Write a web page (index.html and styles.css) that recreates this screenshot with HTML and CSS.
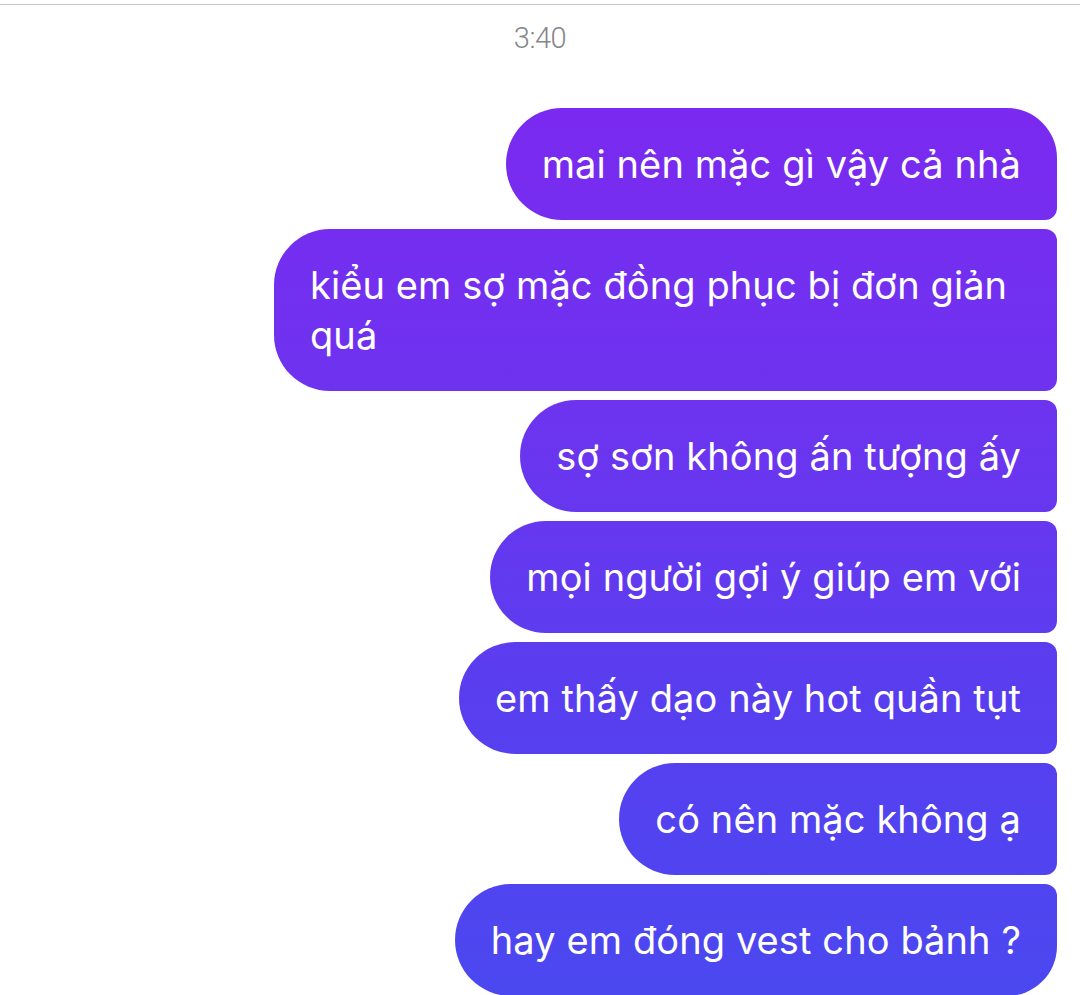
FILE: index.html
```html
<!DOCTYPE html>
<html lang="vi">
<head>
<meta charset="utf-8">
<link rel="stylesheet" href="styles.css">
</head>
<body>
<div class="topline"></div>
<div class="time">3:40</div>
<div class="thread">
  <div class="msg first">mai nên mặc gì vậy cả nhà</div>
  <div class="msg">kiểu em sợ mặc đồng phục bị đơn giản quá</div>
  <div class="msg">sợ sơn không ấn tượng ấy</div>
  <div class="msg">mọi người gợi ý giúp em với</div>
  <div class="msg">em thấy dạo này hot quần tụt</div>
  <div class="msg">có nên mặc không ạ</div>
  <div class="msg last">hay em đóng vest cho bảnh ?</div>
</div>
</body>
</html>
```
FILE: styles.css
```css
html, body {
  margin: 0;
  padding: 0;
  background: #ffffff;
  overflow: hidden;
}
body {
  width: 1080px;
  height: 995px;
  font-family: Inter, "Noto Sans", sans-serif;
}
.topline {
  margin-top: 4px;
  height: 1px;
  background: #c6c6c6;
}
.time {
  margin-top: 16px;
  text-align: center;
  font-family: Roboto, "Liberation Sans", sans-serif;
  font-weight: 300;
  font-size: 29px;
  line-height: 34px;
  color: #86868b;
  letter-spacing: -0.5px;
}
.thread {
  margin-top: 53px;
  padding-right: 23px;
  display: flex;
  flex-direction: column;
  align-items: flex-end;
  gap: 9px;
}
.msg {
  max-width: 711px;
  padding: 31px 36px;
  font-size: 38px;
  line-height: 50px;
  color: #ffffff;
  border-radius: 56px 12px 12px 56px;
  background: linear-gradient(180deg, #7d27f1 0px, #7a2af0 120px, #6b35ef 450px, #583eef 700px, #4b48f0 995px);
  background-attachment: fixed;
  letter-spacing: 0.1px;
}
.msg.first {
  border-top-right-radius: 50px;
}
.msg.last {
  border-bottom-right-radius: 50px;
}
```
